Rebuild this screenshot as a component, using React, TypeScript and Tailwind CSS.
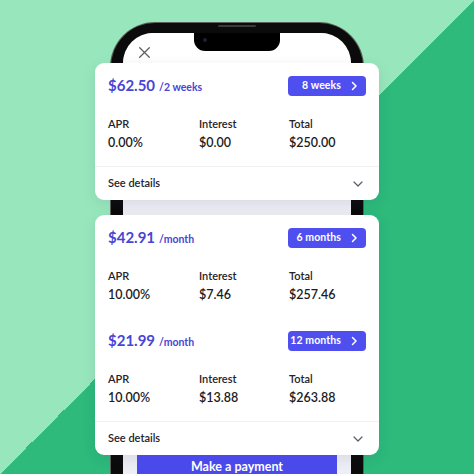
const plans = [
  {
    amount: '$62.50',
    per: '/2 weeks',
    term: '8 weeks',
    apr: '0.00%',
    interest: '$0.00',
    total: '$250.00',
  },
];

const longPlans = [
  {
    amount: '$42.91',
    per: '/month',
    term: '6 months',
    apr: '10.00%',
    interest: '$7.46',
    total: '$257.46',
  },
  {
    amount: '$21.99',
    per: '/month',
    term: '12 months',
    apr: '10.00%',
    interest: '$13.88',
    total: '$263.88',
  },
];

type Plan = (typeof plans)[number];

function ChevronRight() {
  return (
    <svg width="8" height="10" viewBox="0 0 8 10" fill="none" className="shrink-0">
      <path d="M2.5 1.5 6 5 2.5 8.5" stroke="white" strokeWidth="1.5" strokeLinecap="round" strokeLinejoin="round" />
    </svg>
  );
}

function ChevronDown() {
  return (
    <svg width="10" height="6" viewBox="0 0 10 6" fill="none">
      <path d="M1 1 5 5 9 1" stroke="#5b5b66" strokeWidth="1.2" strokeLinecap="round" strokeLinejoin="round" />
    </svg>
  );
}

function PlanBlock({ plan }: { plan: Plan }) {
  return (
    <div className="px-[13px] pt-[13px] pb-[15px]">
      <div className="flex h-[20px] items-center justify-between">
        <div className="flex items-baseline gap-[4px] text-[#4845d4]">
          <span className="text-[15px] font-bold leading-[20px]">{plan.amount}</span>
          <span className="text-[10.5px] font-bold leading-[20px]">{plan.per}</span>
        </div>
        <button className="flex h-[20px] w-[78px] items-center justify-end gap-[9px] whitespace-nowrap rounded-[4px] bg-[#4f4ff0] pr-[8px] text-[10.5px] font-bold tracking-[0.1px] text-white">
          <span>{plan.term}</span>
          <ChevronRight />
        </button>
      </div>
      <div className="mt-[21px] flex text-[11px] font-semibold leading-[14px] text-[#23232b]">
        <span className="w-[91px]">APR</span>
        <span className="w-[90px]">Interest</span>
        <span>Total</span>
      </div>
      <div className="mt-[4px] flex text-[12.5px] font-semibold leading-[16px] text-[#1b1b24]">
        <span className="w-[91px]">{plan.apr}</span>
        <span className="w-[90px]">{plan.interest}</span>
        <span>{plan.total}</span>
      </div>
    </div>
  );
}

function SeeDetails() {
  return (
    <div className="flex h-[34px] items-center justify-between border-t border-[#f0f0f3] pl-[13px] pr-[16px] text-[11px] font-semibold text-[#23232b]">
      <span>See details</span>
      <ChevronDown />
    </div>
  );
}

function Card({ items }: { items: Plan[] }) {
  return (
    <div className="rounded-[9px] bg-white shadow-[0_4px_14px_rgba(40,40,90,0.10)]">
      {items.map((p) => (
        <PlanBlock key={p.term} plan={p} />
      ))}
      <SeeDetails />
    </div>
  );
}

export default function App() {
  return (
    <div
      className="flex h-[474px] w-[474px] flex-col items-center overflow-hidden bg-[linear-gradient(to_bottom_right,#98e7bc_50%,#2dba7b_50%)] pt-[23px]"
      style={{ fontFamily: 'Lato, "Noto Sans", sans-serif' }}
    >
      <div className="relative h-[480px] w-[252px] shrink-0 rounded-t-[44px] bg-[#0b0b0c] px-[12px] pt-[10px] shadow-[0_0_0_1px_#5e5e5a]">
        <div className="absolute left-[107px] top-[2px] h-[2px] w-[38px] rounded-full bg-[#3a3a3a]" />
        <div className="relative flex h-full flex-col rounded-t-[32px] bg-[#eeeef6]">
          <div className="absolute left-1/2 top-0 h-[18px] w-[86px] -translate-x-1/2 rounded-b-[11px] bg-black">
            <div className="absolute left-[9px] top-[5px] h-[4px] w-[4px] rounded-full bg-[#1c2233]" />
          </div>
          <div className="h-[30px] rounded-t-[32px] bg-white pl-[16px] pt-[14px]">
            <svg width="11" height="11" viewBox="0 0 11 11" fill="none" className="block">
              <path d="M0.7 0.7 10.3 10.3M10.3 0.7 0.7 10.3" stroke="#5f5f66" strokeWidth="1.3" strokeLinecap="round" />
            </svg>
          </div>
          <div className="-mx-[28px] flex flex-col gap-[15px]">
            <Card items={plans} />
            <Card items={longPlans} />
          </div>
          <div className="mx-[14px] h-[40px] bg-[#4a4aea] pt-[4px] text-center text-[12.5px] font-bold leading-[16px] text-white">
            Make a payment
          </div>
        </div>
      </div>
    </div>
  );
}
